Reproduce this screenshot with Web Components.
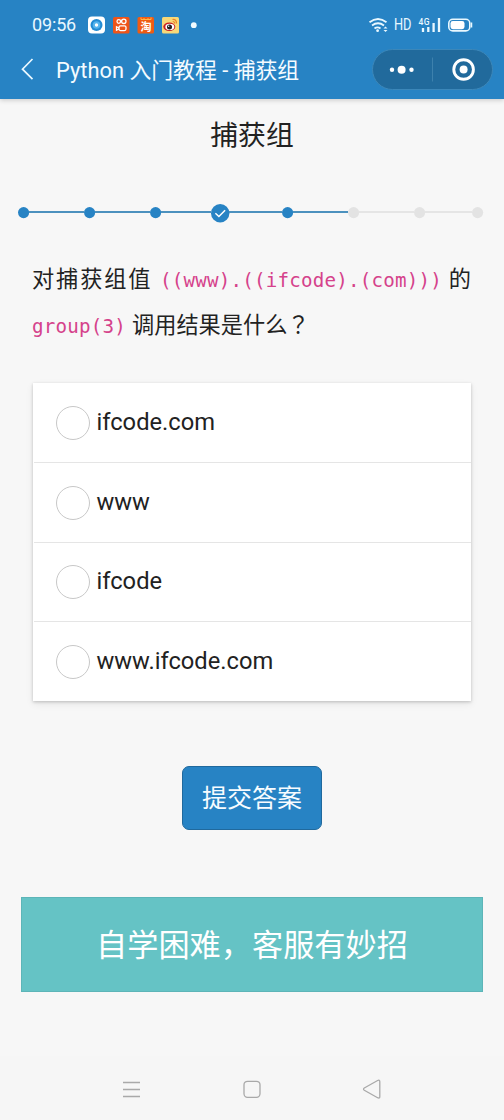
<!DOCTYPE html>
<html lang="zh-CN">
<head>
<meta charset="utf-8">
<title>Python 入门教程 - 捕获组</title>
<style>
html,body{margin:0;padding:0}
body{width:504px;height:1120px;overflow:hidden;background:#f7f7f7;font-family:Roboto,"Noto Sans CJK SC",sans-serif;color:#222}
</style>
</head>
<body>
<quiz-page></quiz-page>
<script>
const define = (name, html) => customElements.define(name, class extends HTMLElement {
  constructor() {
    super();
    const t = document.createElement('template');
    t.innerHTML = html;
    this.attachShadow({mode: 'open'}).append(t.content.cloneNode(true));
  }
});

define('status-bar', `<style>
:host{display:flex;height:50px;padding:0 31px 0 32px;align-items:center;justify-content:space-between;color:#e9f8ff;box-sizing:border-box}
.l,.r{display:flex;align-items:center}
.time{font-size:18px;line-height:20px;width:56px;letter-spacing:-.15px}
svg{display:block}
.hd{font-size:16px;line-height:18px;font-weight:400;width:24px;margin-left:6px;letter-spacing:-.1px;transform:scaleX(.8);transform-origin:left}
</style>
<div class="l"><span class="time">09:56</span>
<svg width="112" height="18" viewBox="88 16 112 18">
 <rect x="88" y="16.5" width="17" height="17" rx="4" fill="#fff"/><circle cx="96.5" cy="25" r="6" fill="#238bd3"/><circle cx="96.5" cy="25" r="3.8" fill="#55b4ed"/><circle cx="96.5" cy="25" r="1.7" fill="#fff"/>
 <rect x="113" y="17" width="16.5" height="16.500" rx="1.500" fill="#ef5418"/><g fill="none" stroke="#fff" stroke-width="1.3"><circle cx="118.800" cy="21.500" r="1.800"/><circle cx="123.800" cy="21.300" r="2.200"/><rect x="119" y="25.800" width="7" height="4.800" rx="1.500"/><path d="M119 28l-2.500-1.300v3.600l2.500-1.300"/></g>
 <rect x="137.500" y="17" width="16.500" height="16.500" rx="1.500" fill="#ef5b12"/><path d="M141 17.500v2h10v-2M144 18v1.800M148 18v1.800" stroke="#ffb747" fill="none"/><text x="140.500" y="31.300" font-size="11" font-weight="700" font-family="Noto Sans CJK SC" fill="#fff">淘</text>
 <rect x="162" y="17" width="17" height="16.500" rx="1.500" fill="#f8d878"/><ellipse cx="169.300" cy="26.800" rx="6" ry="4.300" fill="#c91e22"/><ellipse cx="169.800" cy="26.900" rx="4.500" ry="3.100" fill="#fff"/><circle cx="169.500" cy="27" r="2.500" fill="#241c1c"/><circle cx="168.700" cy="26.300" r=".7" fill="#fff"/><path d="M172.500 19.500q4-.5 4 4M172.700 21.500q2 0 2 2" fill="none" stroke="#ec8427" stroke-width="1.200"/>
 <circle cx="193.800" cy="25.200" r="2.900" fill="#f1fbff"/>
</svg></div>
<div class="r">
<svg width="20" height="18" viewBox="368 16 20 18" fill="none" stroke="#e9f8ff" stroke-width="1.800"><path d="M369.500 22.300q8.500-6.700 17 0M372 25.500q6-4.500 12 0M374.500 28.500q3-2.300 6 0"/><circle cx="377.600" cy="30.700" r="1.400" fill="#e9f8ff" stroke="none"/><path d="M383.500 28.500l2-2 2 2zM383.500 30l2 2 2-2z" fill="#e9f8ff" stroke="none"/></svg>
<span class="hd">HD</span>
<svg width="23" height="18" viewBox="418 16 23 18"><text x="418.500" y="25.200" font-size="8.500" font-family="Roboto" font-weight="500" textLength="11" fill="#e9f8ff">4G</text><path d="M423 28v4M428.300 27v5M433.600 23v9M439 18v14" stroke="#e9f8ff" stroke-width="2.300"/></svg>
<svg style="margin-left:7px" width="25" height="18" viewBox="448 16 25 18"><rect x="448.800" y="19.300" width="21" height="11.600" rx="4" fill="none" stroke="#e9f8ff" stroke-width="1.600"/><rect x="450.500" y="21" width="14" height="8.200" rx="2.400" fill="#fff"/><path d="M471.500 22.500v5" stroke="#e9f8ff" stroke-width="1.500"/></svg>
</div>`);

define('title-bar', `<style>
:host{display:flex;height:49px;align-items:flex-start;color:#f4fbff;box-sizing:border-box;padding:0 11px 0 20px}
.back{display:block;margin:8px 22px 0 0}
.t{font-size:21.850px;line-height:30px;margin-top:6px;white-space:pre;flex:1}
.cap{display:flex;box-sizing:border-box;width:121px;height:41px;margin-top:-1px;border:1px solid #3c87b9;border-radius:21px;background:#216a9c}
</style>
<svg class="back" width="14" height="24" viewBox="20 58 14 24"><path d="M32.500 59L22.500 69.200l10 10" fill="none" stroke="#eaf8ff" stroke-width="1.700"/></svg>
<div class="t"><slot></slot></div>
<div class="cap"><svg width="119" height="39" viewBox="373 50 119 39"><g fill="#fff"><circle cx="392" cy="69.700" r="2.200"/><circle cx="401.600" cy="69.700" r="4"/><circle cx="411.500" cy="69.700" r="2.200"/><circle cx="463.600" cy="69.500" r="4"/></g><path d="M432.500 57.500v24" stroke="#3d81ad"/><circle cx="463.600" cy="69.500" r="9.800" fill="none" stroke="#fff" stroke-width="2.900"/></svg></div>`);

define('app-header', `<style>:host{display:block;height:99px;background:#2783c4;box-shadow:0 1px 5px #0003}</style><slot></slot>`);

customElements.define('step-dot', class extends HTMLElement {
  connectedCallback() {
    const s = this.getAttribute('state');
    const on = s !== 'off', cur = s === 'current';
    const c = on ? '#2783c4' : '#e3e3e3';
    const lineColor = this.hasAttribute('line') ? this.getAttribute('line') : 'transparent';
    const r = cur ? 9.200 : 5.600;
    this.attachShadow({mode: 'open'}).innerHTML = `<style>
:host{display:flex;align-items:center;height:20px;width:${this.getAttribute('w')}px;flex:none}
svg{display:block;flex:none;overflow:visible}.bar{flex:1;height:2px;background:${lineColor};margin-top:-1px}</style>
<svg width="${r * 2}" height="20" viewBox="${-r} -10 ${r * 2} 20"><circle cy="${cur ? 1.2 : .6}" r="${r}" fill="${c}"/>${cur ? '<path d="M-4.800 1.200l3.500 3.300 6.200-6.300" fill="none" stroke="#fff" stroke-width="1.500"/>' : ''}</svg><div class="bar"></div>`;
  }
});

define('step-progress', `<style>:host{display:flex;margin-top:47px;padding-left:18.100px;height:20px}</style>
<step-dot state="on" w="65.900" line="#4c91be"></step-dot><step-dot state="on" w="65.900" line="#4c91be"></step-dot><step-dot state="on" w="60.700" line="#4c91be"></step-dot><step-dot state="current" w="71.500" line="#4c91be"></step-dot><step-dot state="on" w="65.900" line="#4c91be"></step-dot><step-dot state="off" w="65.900" line="#e5e5e5"></step-dot><step-dot state="off" w="58" line="#e5e5e5"></step-dot><step-dot state="off" w="11.200"></step-dot>`);

define('code-text', `<style>:host{display:inline-block;font-family:"DejaVu Sans Mono",monospace;font-size:19.200px;letter-spacing:.2px;color:#d5428b;white-space:pre}</style><slot></slot>`);

define('quiz-question', `<style>
:host{display:block;margin:34px 33px 0 32px;font-size:22.200px;color:#222}
div{display:flex;height:46px;line-height:46px;white-space:pre;align-items:baseline}
.a{letter-spacing:1.900px;width:128px}.c{margin-left:auto}.b{margin-left:6px}.q{font-family:"Noto Sans CJK TC",sans-serif;line-height:0}
</style>
<div><span class="a">对捕获组值</span><code-text>((www).((ifcode).(com)))</code-text><span class="c">的</span></div>
<div><code-text>group(3)</code-text><span class="b">调用结果是什么<span class="q" lang="zh-TW">？</span></span></div>`);

define('answer-option', `<style>
:host{display:flex;box-sizing:border-box;height:79.750px;padding-left:22px;align-items:center;font-size:23.700px;line-height:30px;border-bottom:1px solid #e5e5e5}
:host(:last-child){border-bottom-color:transparent}
i{box-sizing:border-box;width:34px;height:34px;border:1.500px solid #c8c8c8;border-radius:50%;margin:1px 6.500px 0 0}
span{margin-top:-1px}
</style><i></i><span><slot></slot></span>`);

define('answer-list', `<style>:host{display:block;box-sizing:border-box;margin:35px 33px 0;height:318px;width:438px;padding-left:1px;background:#fff;box-shadow:0 1px 3px #0003,0 3px 8px #00000012}</style><slot></slot>`);

define('submit-button', `<style>:host{display:block;margin:65px auto 0;width:140px}
button{display:block;width:140px;height:64px;padding:0;border:1px solid #20699d;border-radius:7px;background:#2783c4;color:#f7fcff;font:25px/62px Roboto,"Noto Sans CJK SC",sans-serif}span{position:relative;top:1px}</style><button><span><slot></slot></span></button>`);

define('help-banner', `<style>:host{display:block;box-sizing:border-box;width:462px;height:95px;margin:67px 21px 0;border:1px solid #5db5b8;background:#65c3c5;color:#fff;text-align:center;font:31.200px/90px "Noto Sans CJK SC",sans-serif}</style><slot></slot>`);

define('system-nav', `<style>:host{display:flex;height:64px;margin-top:auto;padding:2px 122px 0;align-items:center;justify-content:space-between;background:#f6f6f6;box-sizing:border-box}svg{display:block}</style>
<svg width="19" height="20" fill="none" stroke="#a9a9a9" stroke-width="1.300"><path d="M1 3.500h17M1 10.500h17M1 17.500h17"/></svg>
<svg width="20" height="20" fill="none" stroke="#a9a9a9" stroke-width="1.300"><rect x="2" y="2.300" width="16" height="16" rx="3.500"/></svg>
<svg width="20" height="20" fill="none" stroke="#a9a9a9" stroke-width="1.300"><path d="M2.300 9L15.600 1.500Q17.800.6 17.800 2.700v15q0 2-2.200 1L2.300 11.200Q.8 10.200 2.300 9z"/></svg>`);

define('quiz-page', `<style>
:host{display:flex;flex-direction:column;width:504px;height:1120px;background:#f7f7f7}
h1{margin:20px 0 0;height:36px;font-size:27.800px;line-height:34px;font-weight:400;text-align:center}
</style>
<app-header><status-bar></status-bar><title-bar>Python 入门教程 - 捕获组</title-bar></app-header>
<h1>捕获组</h1>
<step-progress></step-progress>
<quiz-question></quiz-question>
<answer-list><answer-option>ifcode.com</answer-option><answer-option>www</answer-option><answer-option>ifcode</answer-option><answer-option>www.ifcode.com</answer-option></answer-list>
<submit-button>提交答案</submit-button>
<help-banner>自学困难，客服有妙招</help-banner>
<system-nav></system-nav>`);
</script>
</body>
</html>
